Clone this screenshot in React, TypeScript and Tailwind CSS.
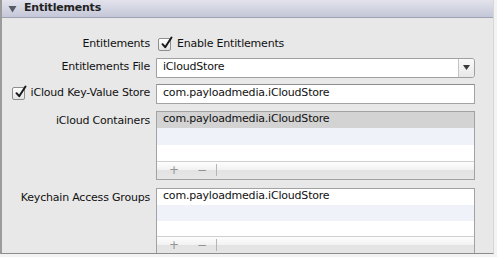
import React from "react";

const font = { fontFamily: '"DejaVu Sans", "Liberation Sans", sans-serif' };

function Check() {
  return (
    <div className="relative w-[13px] h-[13px] rounded-[2px] border border-[#8e8e8e] bg-gradient-to-b from-[#ffffff] to-[#e4e4e4] shrink-0">
      <svg className="absolute left-[1px] top-[-3px]" width="14" height="14" viewBox="0 0 14 14">
        <path d="M2.5 8.2 L5.2 11.2 L11.5 1.5" fill="none" stroke="#1a1a1a" strokeWidth="2" strokeLinecap="round" strokeLinejoin="round" />
      </svg>
    </div>
  );
}

function ListBox({ selected, rows }: { selected: boolean; rows: number[] }) {
  return (
    <div className="w-[319px] border border-[#a2a2a2] bg-white flex flex-col overflow-hidden">
      <div className={`h-[16px] flex items-center pl-[6px] text-[11px] tracking-[-0.2px] text-[#111] ${selected ? "bg-[#d3d3d3]" : "bg-white"}`}>
        com.payloadmedia.iCloudStore
      </div>
      <div className="bg-[#eff3f9]" style={{ height: rows[0] }} />
      <div className="bg-white" style={{ height: rows[1] }} />
      <div className="h-[18px] border-t border-[#cfcfcf] bg-[linear-gradient(to_bottom,#fdfdfd_0%,#f2f2f2_45%,#e3e3e3_50%,#e6e6e6_100%)] flex items-center text-[#949494]">
        <span className="ml-[12px] text-[12px] leading-none">+</span>
        <span className="ml-[18px] text-[12px] leading-none">−</span>
        <span className="ml-[9px] w-px h-[12px] bg-[#b5b5b5]" />
      </div>
    </div>
  );
}

export default function App() {
  return (
    <div className="w-[497px] h-[257px] bg-[#f3f3f3] overflow-hidden" style={font}>
      <div className="w-[494px] h-[254px] bg-[#e8e8e8] border-l-2 border-r border-b border-l-[#9b9b9b] border-r-[#d6d6d6] border-b-[#8c8c8c] flex flex-col overflow-hidden">
        <div className="h-[18px] shrink-0 bg-gradient-to-b from-[#e2e3ec] to-[#c4c7d7] border-b border-[#9fa2b2] flex items-center">
          <svg className="ml-[6px]" width="9" height="8" viewBox="0 0 9 8">
            <path d="M0.5 1 L8.5 1 L4.5 7.5 Z" fill="#555a66" />
          </svg>
          <span className="ml-[7px] text-[11px] font-bold text-[#222] tracking-[-0.2px]">Entitlements</span>
        </div>

        <div className="flex items-center h-[18px] mt-[18px]">
          <div className="w-[148px] text-right text-[11px] tracking-[-0.2px] text-[#111]">Entitlements</div>
          <div className="ml-[8px]"><Check /></div>
          <span className="ml-[6px] text-[11px] tracking-[-0.2px] text-[#111]">Enable Entitlements</span>
        </div>

        <div className="flex items-center mt-[5px]">
          <div className="w-[148px] text-right text-[11px] tracking-[-0.2px] text-[#111]">Entitlements File</div>
          <div className="ml-[6px] w-[319px] h-[20px] bg-white border border-[#a0a0a0] rounded-r-[3px] flex items-stretch">
            <div className="flex-1 flex items-center pl-[6px] text-[11px] tracking-[-0.2px] text-[#111]">iCloudStore</div>
            <div className="w-[16px] border-l border-[#c4c4c4] bg-gradient-to-b from-[#fafafa] to-[#e8e8e8] rounded-r-[3px] flex items-center justify-center">
              <svg width="7" height="5" viewBox="0 0 7 5"><path d="M0 0 L7 0 L3.5 5 Z" fill="#3a3a3a" /></svg>
            </div>
          </div>
        </div>

        <div className="flex items-center mt-[6px]">
          <div className="w-[148px] flex items-center justify-end">
            <Check />
            <span className="ml-[6px] text-[11px] tracking-[-0.2px] text-[#111]">iCloud Key-Value Store</span>
          </div>
          <div className="ml-[6px] w-[319px] h-[20px] bg-white border border-[#a3a3a3] border-t-[#8e8e8e] flex items-center pl-[6px] text-[11px] tracking-[-0.2px] text-[#111]">
            com.payloadmedia.iCloudStore
          </div>
        </div>

        <div className="flex items-start mt-[7px]">
          <div className="w-[148px] text-right text-[11px] tracking-[-0.2px] text-[#111] mt-[2px]">iCloud Containers</div>
          <div className="ml-[6px]"><ListBox selected={true} rows={[17, 16]} /></div>
        </div>

        <div className="flex items-start mt-[8px]">
          <div className="w-[148px] text-right text-[11px] tracking-[-0.2px] text-[#111] mt-[2px]">Keychain Access Groups</div>
          <div className="ml-[6px]"><ListBox selected={false} rows={[16, 15]} /></div>
        </div>
      </div>
    </div>
  );
}
